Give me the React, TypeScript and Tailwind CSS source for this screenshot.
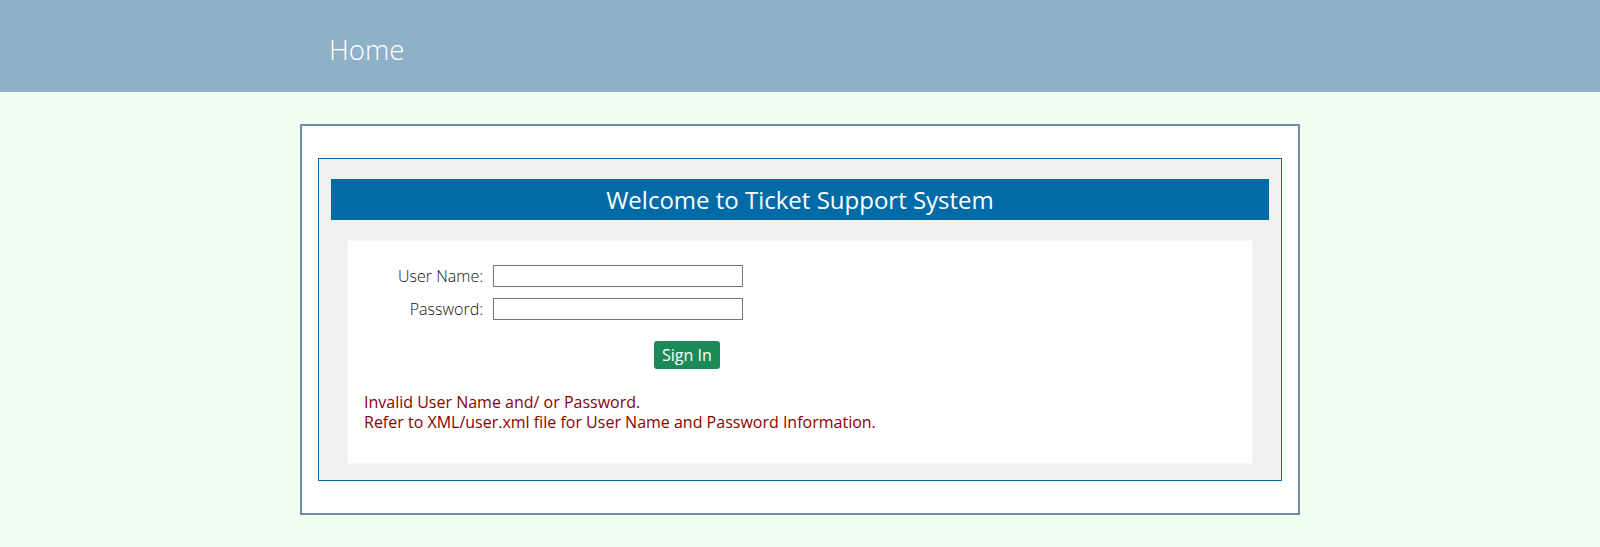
export default function App() {
  return (
    <div className="min-h-[547px] bg-[#f0fff0] font-['Open_Sans',sans-serif]">
      {/* top bar */}
      <header className="h-[92px] bg-[#8fb1c8]">
        <div className="w-[1000px] mx-auto pl-[29px] pt-[29px]">
          <span className="text-[27.5px] font-light text-white leading-normal">Home</span>
        </div>
      </header>

      <main className="pt-[32px]">
        <div className="w-[1000px] mx-auto bg-white border-2 border-[#6f8ea6] px-[16px] py-[32px]">
          <div className="border border-[#0a6aa5] bg-[#f0f0f0] px-[12px] pt-[20px] pb-[16px]">
            <div className="h-[41px] bg-[#006ba7] flex items-center justify-center">
              <h1 className="text-[24px] text-white leading-none">Welcome to Ticket Support System</h1>
            </div>

            <div className="mx-[16px] mt-[20px] h-[224px] bg-white border border-[#eefafa] pt-[24px]">
              <div className="flex flex-col gap-[11px]">
                <div className="flex items-center h-[22px]">
                  <label className="w-[135px] text-right text-[16px] leading-[22px] font-light text-[#111]">User Name:</label>
                  <input type="text" className="ml-[10px] w-[250px] h-[22px] border border-[#767676] bg-white outline-none" />
                </div>
                <div className="flex items-center h-[22px]">
                  <label className="w-[135px] text-right text-[16px] leading-[22px] font-light text-[#111]">Password:</label>
                  <input type="password" className="ml-[10px] w-[250px] h-[22px] border border-[#767676] bg-white outline-none" />
                </div>
              </div>

              <div className="mt-[21px] pl-[306px]">
                <button className="h-[28px] px-[8px] rounded-[3px] bg-[#1b8a58] text-white text-[16px] leading-none">
                  Sign In
                </button>
              </div>

              <div className="mt-[23px] pl-[16px] text-[16px] leading-[20px] text-[#8b0000]">
                <p>Invalid User Name and/ or Password.</p>
                <p>Refer to XML/user.xml file for User Name and Password Information.</p>
              </div>
            </div>
          </div>
        </div>
      </main>
    </div>
  );
}
